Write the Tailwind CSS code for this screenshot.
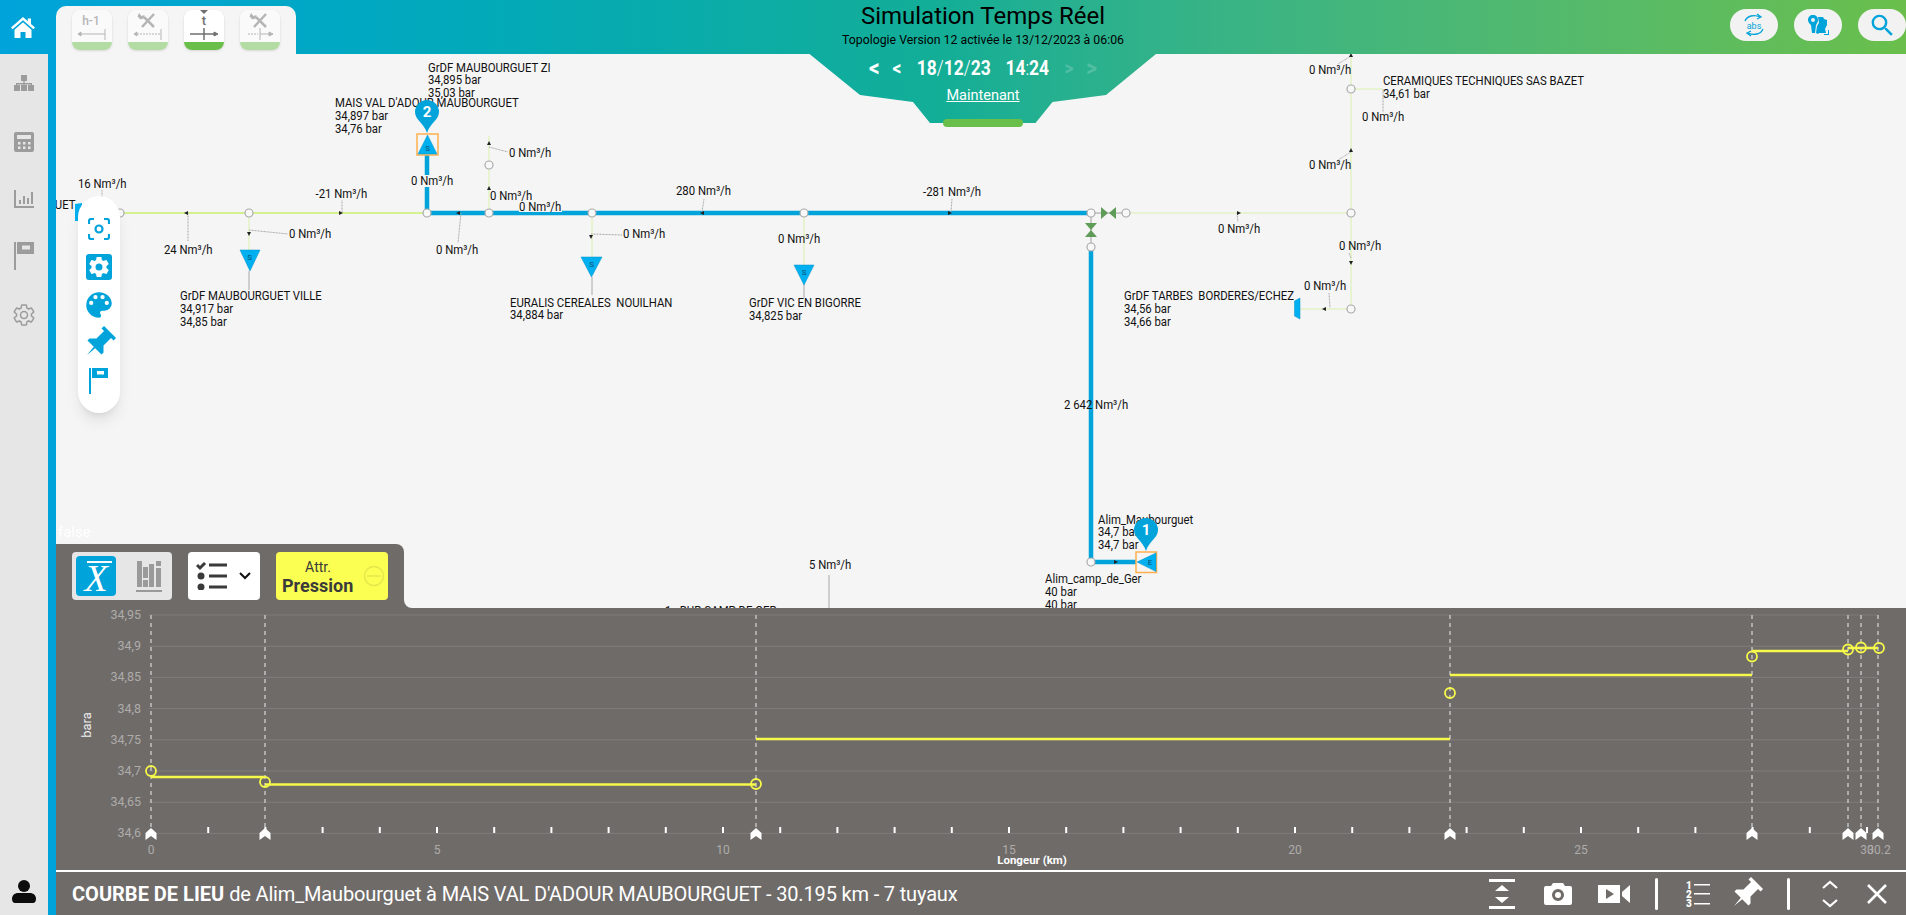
<!DOCTYPE html>
<html lang="fr">
<head>
<meta charset="UTF-8">
<title>Simulation Temps Réel</title>
<script src="https://cdn.jsdelivr.net/npm/@tailwindcss/browser@4"></script>
</head>
<body class="h-screen overflow-hidden bg-[#f5f5f5] font-['Roboto',sans-serif] flex flex-col">

<!-- Top bar -->
<header class="relative z-20 h-[54px] shrink-0 flex items-end">
  <div class="absolute left-0 top-0 w-full h-[123px] bg-linear-to-r from-[#00a3da] via-[#14ae96] to-[#6abf4b] [clip-path:polygon(0_0,100%_0,100%_54px,1156px_54px,1106px_95px,1052.5px_102px,1035.5px_123px,930px_123px,913px_102px,860px_95px,809.5px_54px,0_54px)]"></div>

  <div class="relative w-14 h-full flex justify-start items-center pl-[11px]">
    <svg class="w-6 h-[21px]" viewBox="0 0 24 21" fill="#fff"><path d="M12 0 0 10.5l1.6 1.8L12 3.2l10.400 9.100L24 10.500l-4-3.500V1.500h-3.200v2.700zM12 5.300 3.500 12.800V21h6v-6h5v6h6v-8.200z"/></svg>
  </div>

  <div class="relative w-[240px] h-12 bg-[#f5f5f5] rounded-t-[10px] flex gap-4 pl-4 pt-1">
    <div class="w-10 h-10 rounded-lg bg-[#fafafa] shadow-sm overflow-hidden flex flex-col">
      <svg class="h-8 w-10" viewBox="0 0 40 32" fill="none" stroke="#b5b5b5"><text x="19" y="15" text-anchor="middle" font-size="12" font-weight="500" fill="#b5b5b5" stroke="none">h-1</text><path d="M6 24h27M33 19v11"/><path d="M6 24l3-2v4z" fill="#b5b5b5"/></svg>
      <div class="h-2 bg-[#b2dca4]"></div>
    </div>
    <div class="w-10 h-10 rounded-lg bg-[#fafafa] shadow-sm overflow-hidden flex flex-col">
      <svg class="h-8 w-10" viewBox="0 0 40 32" fill="none" stroke="#b5b5b5"><path d="M16 7l10 10M26 4 14 17" stroke-width="2.500"/><path d="M11 3l2.500 3 3-1-1 3.500-3 1-3-3z" fill="#b5b5b5" stroke="none"/><path d="M6 24h27" stroke-dasharray="2 1"/><path d="M33 19v11"/><path d="M6 24l3-2v4z" fill="#b5b5b5"/></svg>
      <div class="h-2 bg-[#b2dca4]"></div>
    </div>
    <div class="w-10 h-10 rounded-lg bg-white shadow-sm overflow-hidden flex flex-col">
      <svg class="h-8 w-10" viewBox="0 0 40 32" fill="none" stroke="#707070"><path d="M16 0h8l-4 4z" fill="#707070" stroke="none"/><text x="20" y="15" text-anchor="middle" font-size="13" font-weight="500" fill="#707070" stroke="none">t</text><path d="M6 24h26M20 18v12" stroke-width="1.500"/><path d="M34 24l-4-2v4z" fill="#707070"/></svg>
      <div class="h-2 bg-[#6abf4b]"></div>
    </div>
    <div class="w-10 h-10 rounded-lg bg-[#fafafa] shadow-sm overflow-hidden flex flex-col">
      <svg class="h-8 w-10" viewBox="0 0 40 32" fill="none" stroke="#b5b5b5"><path d="M16 7l10 10M26 4 14 17" stroke-width="2.500"/><path d="M11 3l2.500 3 3-1-1 3.500-3 1-3-3z" fill="#b5b5b5" stroke="none"/><path d="M8 24h10" stroke-dasharray="2 1"/><path d="M20 24h11M20 18v12"/><path d="M33 24l-4-2v4z" fill="#b5b5b5"/></svg>
      <div class="h-2 bg-[#b2dca4]"></div>
    </div>
  </div>

  <!-- Centre tab -->
  <div class="absolute left-[810px] top-0 w-[346px] flex flex-col items-center">
    <div class="text-[24px] leading-[33px] text-black">Simulation Temps Réel</div>
    <div class="text-[12.3px] leading-[15px] text-black">Topologie Version 12 activée le 13/12/2023 à 06:06</div>
    <div class="mt-2 h-6 flex items-center text-white font-bold text-[20px] leading-6 [transform:scaleX(.87)]">
      <span class="w-[26px] text-center text-[24px]">&lt;</span>
      <span class="w-[26px] text-center">&lt;</span>
      <span class="ml-[10px]">18<span class="font-light">/</span>12<span class="font-light">/</span>23</span>
      <span class="ml-[17px]">14<span class="font-light">:</span>24</span>
      <span class="ml-[10px] w-[26px] text-center text-white/20">&gt;</span>
      <span class="w-[26px] text-center text-white/20 text-[24px]">&gt;</span>
    </div>
    <a class="mt-[7px] text-[14.5px] leading-[18px] text-white underline">Maintenant</a>
    <div class="mt-[14px] w-20 h-2 rounded-full bg-[#6abf4b]"></div>
  </div>

  <div class="relative ml-auto self-start mt-[9px] flex gap-4">
    <div class="w-12 h-8 rounded-2xl bg-[#f1f2f1] flex items-center justify-center">
      <svg class="w-[22px] h-[24px]" viewBox="0 0 22 24" fill="none" stroke="#00a3da" stroke-width="1.300"><path d="M2 8C4 3 11 1 17 4"/><path d="M14 1l4 3-4 2"/><path d="M20 16c-2 5-9 7-15 4"/><path d="M8 23l-4-3 4-2"/><text x="11" y="15.500" text-anchor="middle" font-size="9" fill="#00a3da" stroke="none">abs</text></svg>
    </div>
    <div class="w-12 h-8 rounded-2xl bg-[#f1f2f1] flex items-center justify-center">
      <svg class="w-[21px] h-5" viewBox="0 0 21 20" fill="#00a3da"><path fill-rule="evenodd" d="M5 0c3 0 5 2 5 5 0 2-1 3-2 5l-1 8H4L3 10C1 8 0 7 0 5c0-3 2-5 5-5zm0 3a2 2 0 1 0 0 4 2 2 0 0 0 0-4z"/><path d="M10 2h5l1 2 3 1v5l-2 4 1 4h-7l-1 1-2-1 1-7 2-3z"/><path d="M20 15h1v5h-5v-1h4z"/></svg>
    </div>
    <div class="w-12 h-8 rounded-2xl bg-[#f1f2f1] flex items-center justify-center">
      <svg class="w-[29px] h-[29px]" viewBox="0 0 24 24" fill="#00a3da"><path d="M9.500,3A6.500,6.500 0 0,1 16,9.500C16,11.110 15.410,12.590 14.440,13.730L14.710,14H15.500L20.500,19L19,20.500L14,15.500V14.710L13.730,14.440C12.590,15.410 11.110,16 9.500,16A6.500,6.500 0 0,1 3,9.500A6.500,6.500 0 0,1 9.500,3M9.500,5C7,5 5,7 5,9.500C5,12 7,14 9.500,14C12,14 14,12 14,9.500C14,7 12,5 9.500,5Z"/></svg>
    </div>
  </div>
</header>

<div class="flex-1 flex min-h-0">
  <!-- Left rail -->
  <aside class="w-12 shrink-0 bg-[#e6e6e6] flex flex-col items-center">
    <svg class="mt-[17px] w-6 h-6" viewBox="0 0 24 24" fill="#9c9c9c"><path d="M9 4h6v6H9zM2 14h6v6H2zM9 14h6v6H9zM16 14h6v6h-6z"/><path d="M11.300 10h1.400v2H20v2h-1.400v-.6H12.700v.6h-1.400v-.6H5.400v.6H4v-2h7.300z"/></svg>
    <svg class="mt-[35px] w-6 h-6" viewBox="0 0 24 24" fill="#9c9c9c"><path fill-rule="evenodd" d="M4 2h16a2 2 0 0 1 2 2v16a2 2 0 0 1-2 2H4a2 2 0 0 1-2-2V4a2 2 0 0 1 2-2zm1 3v4h14V5zm1 7v2.500h2.500V12zm5 0v2.500h2.500V12zm5 0v2.500h2.500V12zm-10 4.500V19h2.500v-2.500zm5 0V19h2.500v-2.500zm5 0V19h2.500v-2.500z"/></svg>
    <svg class="mt-[33px] w-6 h-6" viewBox="0 0 24 24" fill="#9c9c9c"><path d="M2 3h2v16h18v2H2z"/><path d="M7 13h2v4H7zM11 9h2v8h-2zM15 11h2v6h-2zM19 5h2v12h-2z"/></svg>
    <svg class="mt-[31px] w-6 h-7" viewBox="0 0 24 28" fill="#9c9c9c"><path d="M2 0h2v28H2z"/><path fill-rule="evenodd" d="M5 0h17v12H5zm5 3.500v4h8v-4z"/></svg>
    <svg class="mt-[33px] w-6 h-6" viewBox="0 0 24 24" fill="none" stroke="#9c9c9c" stroke-width="1.500"><path d="M12,15.500A3.500,3.500 0 0,1 8.500,12A3.500,3.500 0 0,1 12,8.500A3.500,3.500 0 0,1 15.500,12A3.500,3.500 0 0,1 12,15.500M19.430,12.970C19.470,12.650 19.500,12.330 19.500,12C19.500,11.670 19.470,11.340 19.430,11L21.540,9.370C21.730,9.220 21.780,8.950 21.660,8.730L19.660,5.270C19.540,5.050 19.270,4.960 19.050,5.050L16.560,6.050C16.040,5.660 15.500,5.320 14.870,5.070L14.500,2.420C14.460,2.180 14.250,2 14,2H10C9.750,2 9.540,2.180 9.500,2.420L9.130,5.070C8.500,5.320 7.960,5.660 7.440,6.050L4.950,5.050C4.730,4.960 4.460,5.050 4.340,5.270L2.340,8.730C2.210,8.950 2.270,9.220 2.460,9.370L4.570,11C4.530,11.340 4.500,11.670 4.500,12C4.500,12.330 4.530,12.650 4.570,12.970L2.460,14.630C2.270,14.780 2.210,15.050 2.340,15.270L4.340,18.730C4.460,18.950 4.730,19.030 4.950,18.950L7.440,17.940C7.960,18.340 8.500,18.680 9.130,18.930L9.500,21.580C9.540,21.820 9.750,22 10,22H14C14.250,22 14.460,21.820 14.500,21.580L14.870,18.930C15.500,18.670 16.040,18.340 16.560,17.940L19.050,18.950C19.270,19.030 19.540,18.950 19.660,18.730L21.660,15.270C21.780,15.050 21.730,14.780 21.540,14.630L19.430,12.970Z"/></svg>
    <svg class="mt-auto mb-[12px] w-6 h-6" viewBox="0 0 24 24" fill="#0d0d0d"><circle cx="12" cy="7" r="6"/><path d="M0 20c0-4 3-6 6-6h12c3 0 6 2 6 6 0 2-1 4-3 4H3c-2 0-3-2-3-4z"/></svg>
  </aside>
  <div class="w-2 shrink-0 bg-[#00a3da]"></div>

  <main class="flex-1 min-w-0 flex flex-col">
    <!-- Network canvas -->
    <div class="relative flex-1 min-h-0 overflow-hidden">
      <svg id="net" class="absolute inset-0 w-full h-full" viewBox="56 54 1850 554"></svg>

      <!-- floating tool pill -->
      <div class="absolute left-[22px] top-[142px] w-[42px] h-[217px] rounded-full bg-white shadow-lg flex flex-col items-center pt-[22px]">
        <svg class="w-[22px] h-[22px] shrink-0" viewBox="0 0 22 22" fill="none" stroke="#00a3da" stroke-width="2.200"><path d="M1 6V3a2 2 0 0 1 2-2h3M16 1h3a2 2 0 0 1 2 2v3M21 16v3a2 2 0 0 1-2 2h-3M6 21H3a2 2 0 0 1-2-2v-3"/><circle cx="11" cy="11" r="3.500"/></svg>
        <div class="mt-[14px] w-[26px] h-[26px] shrink-0 rounded-[3px] bg-[#00a3da] flex items-center justify-center">
          <svg class="w-[24px] h-[24px]" viewBox="0 0 24 24" fill="#fff"><path d="M12,15.500A3.500,3.500 0 0,1 8.500,12A3.500,3.500 0 0,1 12,8.500A3.500,3.500 0 0,1 15.500,12A3.500,3.500 0 0,1 12,15.500M19.430,12.970C19.470,12.650 19.500,12.330 19.500,12C19.500,11.670 19.470,11.340 19.430,11L21.540,9.370C21.730,9.220 21.780,8.950 21.660,8.730L19.660,5.270C19.540,5.050 19.270,4.960 19.050,5.050L16.560,6.050C16.040,5.660 15.500,5.320 14.870,5.070L14.500,2.420C14.460,2.180 14.250,2 14,2H10C9.750,2 9.540,2.180 9.500,2.420L9.130,5.070C8.500,5.320 7.960,5.660 7.440,6.050L4.950,5.050C4.730,4.960 4.460,5.050 4.340,5.270L2.340,8.730C2.210,8.950 2.270,9.220 2.460,9.370L4.570,11C4.530,11.340 4.500,11.670 4.500,12C4.500,12.330 4.530,12.650 4.570,12.970L2.460,14.630C2.270,14.780 2.210,15.050 2.340,15.270L4.340,18.730C4.460,18.950 4.730,19.030 4.950,18.950L7.440,17.940C7.960,18.340 8.500,18.680 9.130,18.930L9.500,21.580C9.540,21.820 9.750,22 10,22H14C14.250,22 14.460,21.820 14.500,21.580L14.870,18.930C15.500,18.670 16.040,18.340 16.560,17.940L19.050,18.950C19.270,19.030 19.540,18.950 19.660,18.730L21.660,15.270C21.780,15.050 21.730,14.780 21.540,14.630L19.430,12.970Z"/></svg>
        </div>
        <svg class="mt-[8px] w-[34px] h-[34px] shrink-0" viewBox="0 0 24 24" fill="#00a3da"><path d="M17.500,12A1.500,1.500 0 0,1 16,10.500A1.500,1.500 0 0,1 17.500,9A1.500,1.500 0 0,1 19,10.500A1.500,1.500 0 0,1 17.500,12M14.500,8A1.500,1.500 0 0,1 13,6.500A1.500,1.500 0 0,1 14.500,5A1.500,1.500 0 0,1 16,6.500A1.500,1.500 0 0,1 14.500,8M9.500,8A1.500,1.500 0 0,1 8,6.500A1.500,1.500 0 0,1 9.500,5A1.500,1.500 0 0,1 11,6.500A1.500,1.500 0 0,1 9.500,8M6.500,12A1.500,1.500 0 0,1 5,10.500A1.500,1.500 0 0,1 6.500,9A1.500,1.500 0 0,1 8,10.500A1.500,1.500 0 0,1 6.500,12M12,3A9,9 0 0,0 3,12A9,9 0 0,0 12,21A1.500,1.500 0 0,0 13.500,19.500C13.500,19.110 13.350,18.760 13.110,18.500C12.880,18.230 12.730,17.880 12.730,17.500A1.500,1.500 0 0,1 14.230,16H16A5,5 0 0,0 21,11C21,6.580 16.970,3 12,3Z"/></svg>
        <svg class="mt-[4px] w-[34px] h-[34px] shrink-0 rotate-45" viewBox="0 0 24 24" fill="#00a3da"><path d="M6 1H18V3.500H15.500V11L19 14.500V16.500H12.700L12 24L11.300 16.500H5V14.500L8.500 11V3.500H6Z"/></svg>
        <svg class="mt-[8px] w-[22px] h-[26px] shrink-0" viewBox="0 0 22 26" fill="#00a3da"><path d="M1 0h2v26H1z"/><path fill-rule="evenodd" d="M4 0h16v10H4zm5 3v3.500h7V3z"/></svg>
      </div>

      <div class="absolute left-[2px] top-[470px] text-[15px] leading-4 text-white">false</div>

      <!-- chart tabs -->
      <div class="absolute left-0 bottom-0 w-[348px] h-16 bg-[#6f6b69] rounded-tr-lg flex gap-4 pl-4 pt-2">
        <div class="w-[100px] h-12 rounded bg-[#e6e6e6] flex items-center pl-1">
          <div class="relative w-10 h-10 rounded bg-[#00a3da] flex items-center justify-center">
            <div class="absolute left-[11px] top-[5px] w-[25px] h-[2px] bg-white"></div>
            <span class="font-['Liberation_Serif',serif] italic text-white text-[38px] leading-10 mt-[3px]">X</span>
          </div>
          <svg class="ml-5 w-[26px] h-8" viewBox="0 0 26 32" fill="#9a9a9a"><path d="M1 1h5v26H1zM7 7h5v11H7zM7 20h5v7H7zM13 4h5v23h-5zM20 1h5v5h-5zM20 8h5v19h-5z"/><path d="M0 30h26v2H0z"/></svg>
        </div>
        <div class="w-[72px] h-12 rounded bg-white flex items-center pl-2">
          <svg class="w-8 h-[28px]" viewBox="0 0 32 28" fill="none" stroke="#3a3a3a" stroke-width="3"><path d="M1 3l3 3 5-5M13 3h18M13 14h18M13 25h18"/><circle cx="5" cy="14" r="3.500" fill="#3a3a3a" stroke="none"/><circle cx="5" cy="25" r="3.500" fill="#3a3a3a" stroke="none"/></svg>
          <svg class="ml-[11px] w-[12px] h-2" viewBox="0 0 12 8" fill="none" stroke="#111" stroke-width="2"><path d="M1 1l5 5 5-5"/></svg>
        </div>
        <div class="relative w-[112px] h-12 rounded bg-[#fbff52] text-[#3a3a3a]">
          <div class="absolute left-0 top-[7px] w-[84px] text-center text-[14px] leading-4">Attr.</div>
          <div class="absolute left-[6px] top-[22px] font-bold text-[18px] leading-6">Pression</div>
          <svg class="absolute right-[3px] top-[13px] w-[22px] h-[22px]" viewBox="0 0 22 22" fill="none" stroke="#e4e74c" stroke-width="1.500"><circle cx="11" cy="11" r="9.500"/><path d="M4 11h14"/></svg>
        </div>
        <div class="absolute left-full bottom-0 w-2 h-2 bg-[#6f6b69]"><div class="w-2 h-2 bg-[#f5f5f5] rounded-bl-lg"></div></div>
      </div>
    </div>

    <!-- Chart -->
    <div class="h-[262px] shrink-0 bg-[#6f6b69]">
      <svg id="chart" class="w-full h-full" viewBox="56 608 1850 262"></svg>
    </div>

    <!-- Footer -->
    <footer class="h-[45px] shrink-0 border-t-2 border-white bg-[#6f6b69] flex items-center pl-4 pr-[19px] text-white text-[20px]">
      <div class="whitespace-nowrap"><b class="font-bold">COURBE DE LIEU</b> <span class="tracking-[-0.16px]">de Alim_Maubourguet à MAIS VAL D'ADOUR MAUBOURGUET - 30.195 km - 7 tuyaux</span></div>
      <div class="ml-auto flex items-center">
        <svg class="w-[26px] h-[30px]" viewBox="0 0 26 30" fill="#fff"><path d="M0 0h26v3H0zM0 27h26v3H0zM13 6l7 6H6zM13 24l-7-6h14z"/></svg>
        <svg class="ml-[29px] w-[28px] h-[22px]" viewBox="0 0 28 22" fill="#fff"><path fill-rule="evenodd" d="M9 0h10l2 3h5a2 2 0 0 1 2 2v15a2 2 0 0 1-2 2H2a2 2 0 0 1-2-2V5a2 2 0 0 1 2-2h5zm5 6a6 6 0 1 0 0 12 6 6 0 0 0 0-12zm0 3a3 3 0 1 1 0 6 3 3 0 0 1 0-6z"/></svg>
        <svg class="ml-[26px] w-8 h-[18px]" viewBox="0 0 32 18" fill="#fff"><path fill-rule="evenodd" d="M0 0h22v18H0zm8 4v10l8-5z"/><path d="M24 7l8-7v18l-8-7z"/></svg>
        <div class="ml-[25px] w-[3px] h-8 rounded-full bg-white"></div>
        <svg class="ml-[28px] w-6 h-[26px]" viewBox="0 0 24 26" fill="#fff"><text x="0" y="8" font-size="10" font-weight="900">1</text><text x="0" y="17" font-size="10" font-weight="900">2</text><text x="0" y="26" font-size="10" font-weight="900">3</text><path d="M8 3h16v1.500H8zM8 12h16v1.500H8zM8 22h16v1.500H8z"/></svg>
        <svg class="ml-[18.5px] w-[34px] h-[34px] rotate-45" viewBox="0 0 24 24" fill="#fff"><path d="M6 1H18V3.500H15.500V11L19 14.500V16.500H12.700L12 24L11.300 16.500H5V14.500L8.500 11V3.500H6Z"/></svg>
        <div class="ml-[24.5px] w-[3px] h-8 rounded-full bg-white"></div>
        <svg class="ml-[32px] w-[16px] h-[28px]" viewBox="0 0 16 28" fill="none" stroke="#fff" stroke-width="2.200"><path d="M1 8l7-6 7 6M1 20l7 6 7-6"/></svg>
        <svg class="ml-[29px] w-5 h-5" viewBox="0 0 20 20" fill="none" stroke="#fff" stroke-width="2.600"><path d="M1 1l18 18M19 1 1 19"/></svg>
      </div>
    </footer>
  </main>
</div>

<script>
  const BLUE = '#00a3da', TRI = '#00b0f0', GREEN = '#d9f0ac', LEAD = '#a8a8a8';
  let s = '';
  const line = (d, c, w, extra = '') => { s += `<path d="${d}" fill="none" stroke="${c}" stroke-width="${w}" ${extra}/>`; };

  // pipes
  line('M120 213H427', '#d3f28f', 2);
  line('M489 136V213M249 213V250M592 213V257M804 213V265', GREEN, 1);
  line('M1126 213H1351M1351 54V309M1351 89H1382M1351 309H1300', GREEN, 1);
  line('M427 155V213H1091M1091 247V562H1150', BLUE, 4.5);
  line('M1091 213H1126M1091 213V247', '#a0a0a0', 1);
  line('M249 271V290M592 277V295M804 284V298M829 575V608', LEAD, 1);

  // leaders from flow arrows to their labels
  [[102,190,102,213],[188,213,188,241],[342,212,342,200],[249,230,288,234],[461,213,458,243],[489,147,508,152],
   [591,234,622,235],[702,212,704,199],[951,212,952,199],[1237,213,1238,222],[1351,56,1338,64],[1351,152,1338,160],
   [1383,89,1383,112],[1351,258,1349,253],[1329,293,1330,308]]
    .forEach(l => { s += `<path d="M${l[0]} ${l[1]}L${l[2]} ${l[3]}" stroke="${LEAD}" stroke-width="1" stroke-dasharray="1 .5"/>`; });

  // flow arrows
  const arrows = { u: '0,-3 -2,1 2,1', d: '0,3 -2,-1 2,-1', l: '-3,0 1,-2 1,2', r: '3,0 -1,-2 -1,2' };
  [[187,213,'l'],[340,213,'r'],[249,233,'d'],[459,213,'l'],[489,144,'u'],[489,189,'u'],[591,236,'d'],[703,213,'l'],[949,213,'r'],
   [1238,213,'r'],[1351,56,'u'],[1351,151,'u'],[1351,262,'d'],[1325,309,'l'],[1115,562,'r']]
    .forEach(a => { s += `<polygon transform="translate(${a[0]} ${a[1]})" points="${arrows[a[2]]}" fill="#222"/>`; });

  // valves
  s += `<path d="M1101 207v12l7-6zM1116 207v12l-7-6z" fill="#5f9c57"/><path d="M1085 223h12l-6 7zM1085 237h12l-6-7z" fill="#5f9c57"/>`;

  // nodes
  [[120,213],[249,213],[427,213],[489,213],[592,213],[804,213],[1091,213],[1126,213],[1091,247],[1351,213],[1351,89],[1351,309],[489,165],[1091,562]]
    .forEach(n => { s += `<circle cx="${n[0]}" cy="${n[1]}" r="4" fill="#f8f8f8" stroke="#aaa" stroke-width="1.200"/>`; });

  // delivery points
  const tri = (p, lx, ly, t) => {
    s += `<polygon points="${p}" fill="${TRI}" stroke="#0090c8" stroke-width=".5"/><text x="${lx}" y="${ly}" text-anchor="middle" font-size="8" fill="#0b4f70">${t}</text>`;
  };
  tri('240,250 260,250 250,271', 249.500, 260, 'S');
  tri('581,257 602,257 591.500,277', 591.500, 267, 'S');
  tri('794,265 814,265 804,285', 804, 275, 'S');
  s += `<polygon points="75,204 82,203 82,221 75,221" fill="${TRI}"/>`;
  s += `<polygon points="1294.500,301 1300,298 1300,319 1294.500,316" fill="${TRI}" stroke="#0090c8" stroke-width=".5"/>`;

  // selected points with their pins
  s += `<rect x="417" y="134" width="21" height="21" fill="#f5f5f5" stroke="#ffb04d" stroke-width="1.500"/>`;
  tri('427.500,135 437,154 418,154', 427.500, 151, 'S');
  s += `<rect x="1136" y="552" width="20.500" height="20.500" fill="#f5f5f5" stroke="#ffb04d" stroke-width="1.500"/>`;
  tri('1137,562 1156,553 1156,571.500', 1150, 565, 'E');

  // labels: x, centre y, text
  const NM = ' Nm³/h';
  const labels = [
    [428,68,'GrDF MAUBOURGUET ZI'],[428,80,'34,895 bar'],[428,93,'35,03 bar'],
    [335,103,"MAIS VAL D'ADOUR MAUBOURGUET"],[335,116,'34,897 bar'],[335,129,'34,76 bar'],
    [78,184,'16'+NM],[315.500,194,'-21'+NM],[164,250,'24'+NM],[289,234,'0'+NM],[436,250,'0'+NM],[509,153,'0'+NM],[490,196,'0'+NM],[623,234,'0'+NM],
    [180,296,'GrDF MAUBOURGUET VILLE'],[180,309,'34,917 bar'],[180,322,'34,85 bar'],
    [510,303,'EURALIS CEREALES  NOUILHAN'],[510,315,'34,884 bar'],
    [749,303,'GrDF VIC EN BIGORRE'],[749,316,'34,825 bar'],
    [676,191,'280'+NM],[923,192,'-281'+NM],[778,239,'0'+NM],[1218,229,'0'+NM],[1309,70,'0'+NM],[1309,165,'0'+NM],[1362,117,'0'+NM],
    [1383,81,'CERAMIQUES TECHNIQUES SAS BAZET'],[1383,94,'34,61 bar'],[1339,246,'0'+NM],[1304,286,'0'+NM],
    [1124,296,'GrDF TARBES  BORDERES/ECHEZ'],[1124,309,'34,56 bar'],[1124,322,'34,66 bar'],
    [1064,405,'2 642'+NM],[1098,520,'Alim_Maubourguet'],[1098,532,'34,7 bar'],[1098,545,'34,7 bar'],
    [1045,579,'Alim_camp_de_Ger'],[1045,592,'40 bar'],[1045,605,'40 bar'],[809,565,'5'+NM],[665,611,'1   BUR CAMP DE GER']
  ];
  s += `<rect x="411" y="175" width="44" height="12" fill="#f5f5f5"/><rect x="519" y="201" width="43" height="11" fill="#f5f5f5"/>`;
  labels.push([411,181,'0'+NM],[519,207,'0'+NM]);
  const label = (x, y, t, anchor = 'start') => {
    s += `<text transform="translate(${x} ${y+4}) scale(.945 1)" text-anchor="${anchor}" font-size="12" fill="#111" xml:space="preserve">${t}</text>`;
  };
  labels.forEach(l => label(l[0], l[1], l[2]));
  label(75.500, 205, 'GrDF MAUBOURGUET', 'end');

  // pins
  const pin = (x, top, n) => {
    const tip = top + 33;
    s += `<path d="M${x} ${tip}C${x-3} ${tip-10} ${x-12} ${top+20} ${x-12} ${top+12}A12 12 0 1 1 ${x+12} ${top+12}C${x+12} ${top+20} ${x+3} ${tip-10} ${x} ${tip}Z" fill="${BLUE}"/>`;
    s += `<text x="${x}" y="${top+17}" text-anchor="middle" font-size="15" font-weight="700" fill="#fff">${n}</text>`;
  };
  pin(427, 100, 2);
  pin(1146, 518, 1);
  document.getElementById('net').innerHTML = s;

  // chart
  s = '';
  const X0 = 151, KM = 57.2, XEND = 1878;
  ['34,95','34,9','34,85','34,8','34,75','34,7','34,65','34,6'].forEach((t, i) => {
    const y = 615 + i * 31.2;
    line(`M149 ${y}H${XEND}`, '#817d7b', 1);
    s += `<text x="141" y="${y+4}" text-anchor="end" font-size="12.5" fill="#aeaba9">${t}</text>`;
  });
  const stations = [151,265,756,1450,1752,1848,1861,1878];
  stations.forEach(x => line(`M${x} 615V830`, '#c4c2c0', 1.5, 'stroke-dasharray="4 4"'));
  for (let k = 1; k <= 30; k++) line(`M${X0 + k * KM} 827V833`, '#fff', 2);
  stations.forEach(x => { s += `<path d="M${x-5.500} 840V833L${x} 828L${x+5.500} 833V840L${x} 836Z" fill="#fff"/>`; });
  [[0,'0'],[5,'5'],[10,'10'],[15,'15'],[20,'20'],[25,'25'],[30,'30']].forEach(t => {
    s += `<text x="${X0 + t[0] * KM}" y="854" text-anchor="middle" font-size="12" fill="#aeaba9">${t[1]}</text>`;
  });
  s += `<text x="1879" y="854" text-anchor="middle" font-size="12" fill="#aeaba9">30.2</text>`;
  s += `<text x="1032" y="864" text-anchor="middle" font-size="11.5" font-weight="700" fill="#fff">Longeur (km)</text>`;
  s += `<text transform="translate(91 725) rotate(-90)" text-anchor="middle" font-size="13" fill="#eee">bara</text>`;
  [[151,265,777],[265,756,784.500],[756,1450,739],[1450,1752,675],[1752,1848,651],[1848,1878,648]]
    .forEach(p => line(`M${p[0]} ${p[2]}H${p[1]}`, '#f7f94a', 2.5));
  [[151,771],[265,782],[756,784],[1450,693],[1752,656.500],[1848,649.500],[1861,647.500],[1879,648]]
    .forEach(c => { s += `<circle cx="${c[0]}" cy="${c[1]}" r="5" fill="none" stroke="#f7f94a" stroke-width="1.800"/>`; });
  document.getElementById('chart').innerHTML = s;
</script>
</body>
</html>
